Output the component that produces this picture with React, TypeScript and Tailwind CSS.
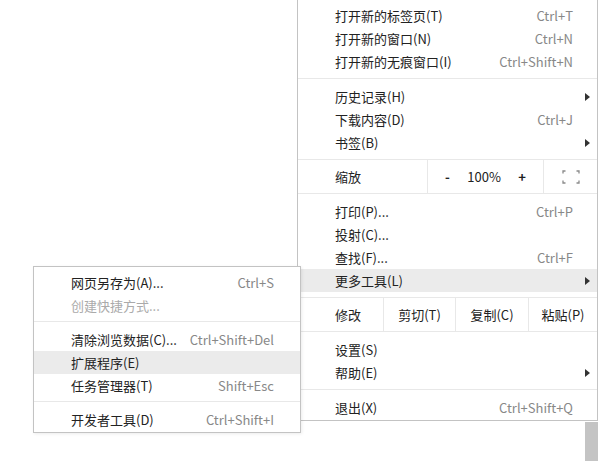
import type { ReactNode } from 'react';

const font = { fontFamily: '"Noto Sans CJK SC", "Noto Sans", sans-serif' };

function Arrow() {
  return (
    <svg width="5" height="8" viewBox="0 0 5 8" className="absolute right-[7px] top-[8px]">
      <path d="M0 0 L5 4 L0 8 Z" fill="#333" />
    </svg>
  );
}

function Item({
  label,
  shortcut,
  arrow,
  active,
  disabled,
  pl = 'pl-[37px]',
  pr = 'pr-[24px]',
}: {
  label: string;
  shortcut?: string;
  arrow?: boolean;
  active?: boolean;
  disabled?: boolean;
  pl?: string;
  pr?: string;
}) {
  return (
    <div
      className={`relative flex h-[23px] items-center justify-between ${pl} ${pr} ${
        active ? 'bg-[#ebebeb]' : ''
      }`}
    >
      <span className={disabled ? 'text-[#aaaaaa]' : 'text-[#222]'}>{label}</span>
      {shortcut && <span className="text-[#888]">{shortcut}</span>}
      {arrow && <Arrow />}
    </div>
  );
}

function Sep({ className = 'my-[5px]' }: { className?: string }) {
  return <div className={`h-px bg-[#e8e8e8] ${className}`} />;
}

function Cell({ children, className = '' }: { children: ReactNode; className?: string }) {
  return <div className={`flex h-full items-center ${className}`}>{children}</div>;
}

function FullscreenIcon() {
  return (
    <svg width="18" height="14" viewBox="0 0 18 14" fill="none" stroke="#8a8a8a" strokeWidth="1.3">
      <path d="M1 3.5 V1 H3.5" />
      <path d="M14.5 1 H17 V3.5" />
      <path d="M17 10.5 V13 H14.5" />
      <path d="M3.5 13 H1 V10.5" />
    </svg>
  );
}

export default function App() {
  return (
    <div className="relative h-[461px] w-[600px] overflow-hidden bg-white text-[13px]" style={font}>
      <div className="absolute left-[585px] top-[422px] h-[40px] w-[13px] bg-[#c4c4c4]" />

      <div className="absolute left-[297px] top-0 w-[301px] border-x border-b border-[#c3c3c3] bg-white pb-px">
        <div className="pt-[4px]">
          <Item label="打开新的标签页(T)" shortcut="Ctrl+T" />
          <Item label="打开新的窗口(N)" shortcut="Ctrl+N" />
          <Item label="打开新的无痕窗口(I)" shortcut="Ctrl+Shift+N" />
        </div>
        <Sep className="mb-[6px] mt-[5px]" />
        <Item label="历史记录(H)" arrow />
        <Item label="下载内容(D)" shortcut="Ctrl+J" />
        <Item label="书签(B)" arrow />
        <div className="mt-[5px] flex h-[35px] border-y border-[#e8e8e8]">
          <Cell className="w-[130px] border-r border-[#e8e8e8] pl-[37px] text-[#222]">缩放</Cell>
          <Cell className="w-[116px] justify-between border-r border-[#e8e8e8] pl-[17px] pr-[17px] text-[#222]">
            <span className="font-bold">-</span>
            <span>100%</span>
            <span className="font-bold">+</span>
          </Cell>
          <Cell className="flex-1 justify-center">
            <FullscreenIcon />
          </Cell>
        </div>
        <div className="pt-[6px]">
          <Item label="打印(P)..." shortcut="Ctrl+P" />
          <Item label="投射(C)..." />
          <Item label="查找(F)..." shortcut="Ctrl+F" />
          <Item label="更多工具(L)" arrow active />
        </div>
        <div className="mt-[5px] flex h-[35px] border-y border-[#e8e8e8] text-[#222]">
          <Cell className="w-[86px] border-r border-[#e8e8e8] pl-[37px]">修改</Cell>
          <Cell className="w-[72px] justify-center border-r border-[#e8e8e8]">剪切(T)</Cell>
          <Cell className="w-[73px] justify-center border-r border-[#e8e8e8]">复制(C)</Cell>
          <Cell className="flex-1 justify-center">粘贴(P)</Cell>
        </div>
        <div className="pt-[6px]">
          <Item label="设置(S)" />
          <Item label="帮助(E)" arrow />
        </div>
        <Sep className="mb-[6px] mt-[5px]" />
        <Item label="退出(X)" shortcut="Ctrl+Shift+Q" />
      </div>

      <div className="absolute left-[33px] top-[266px] w-[268px] border border-[#c3c3c3] bg-white pb-[1px] shadow-[1px_1px_3px_rgba(0,0,0,0.08)]">
        <div className="pt-[4px]">
          <Item label="网页另存为(A)..." shortcut="Ctrl+S" pr="pr-[26px]" />
          <Item label="创建快捷方式..." disabled pr="pr-[26px]" />
        </div>
        <Sep className="mb-[6px] mt-[4px]" />
        <Item label="清除浏览数据(C)..." shortcut="Ctrl+Shift+Del" pr="pr-[26px]" />
        <Item label="扩展程序(E)" active pr="pr-[26px]" />
        <Item label="任务管理器(T)" shortcut="Shift+Esc" pr="pr-[26px]" />
        <Sep className="mb-[6px] mt-[4px]" />
        <Item label="开发者工具(D)" shortcut="Ctrl+Shift+I" pr="pr-[26px]" />
      </div>
    </div>
  );
}
